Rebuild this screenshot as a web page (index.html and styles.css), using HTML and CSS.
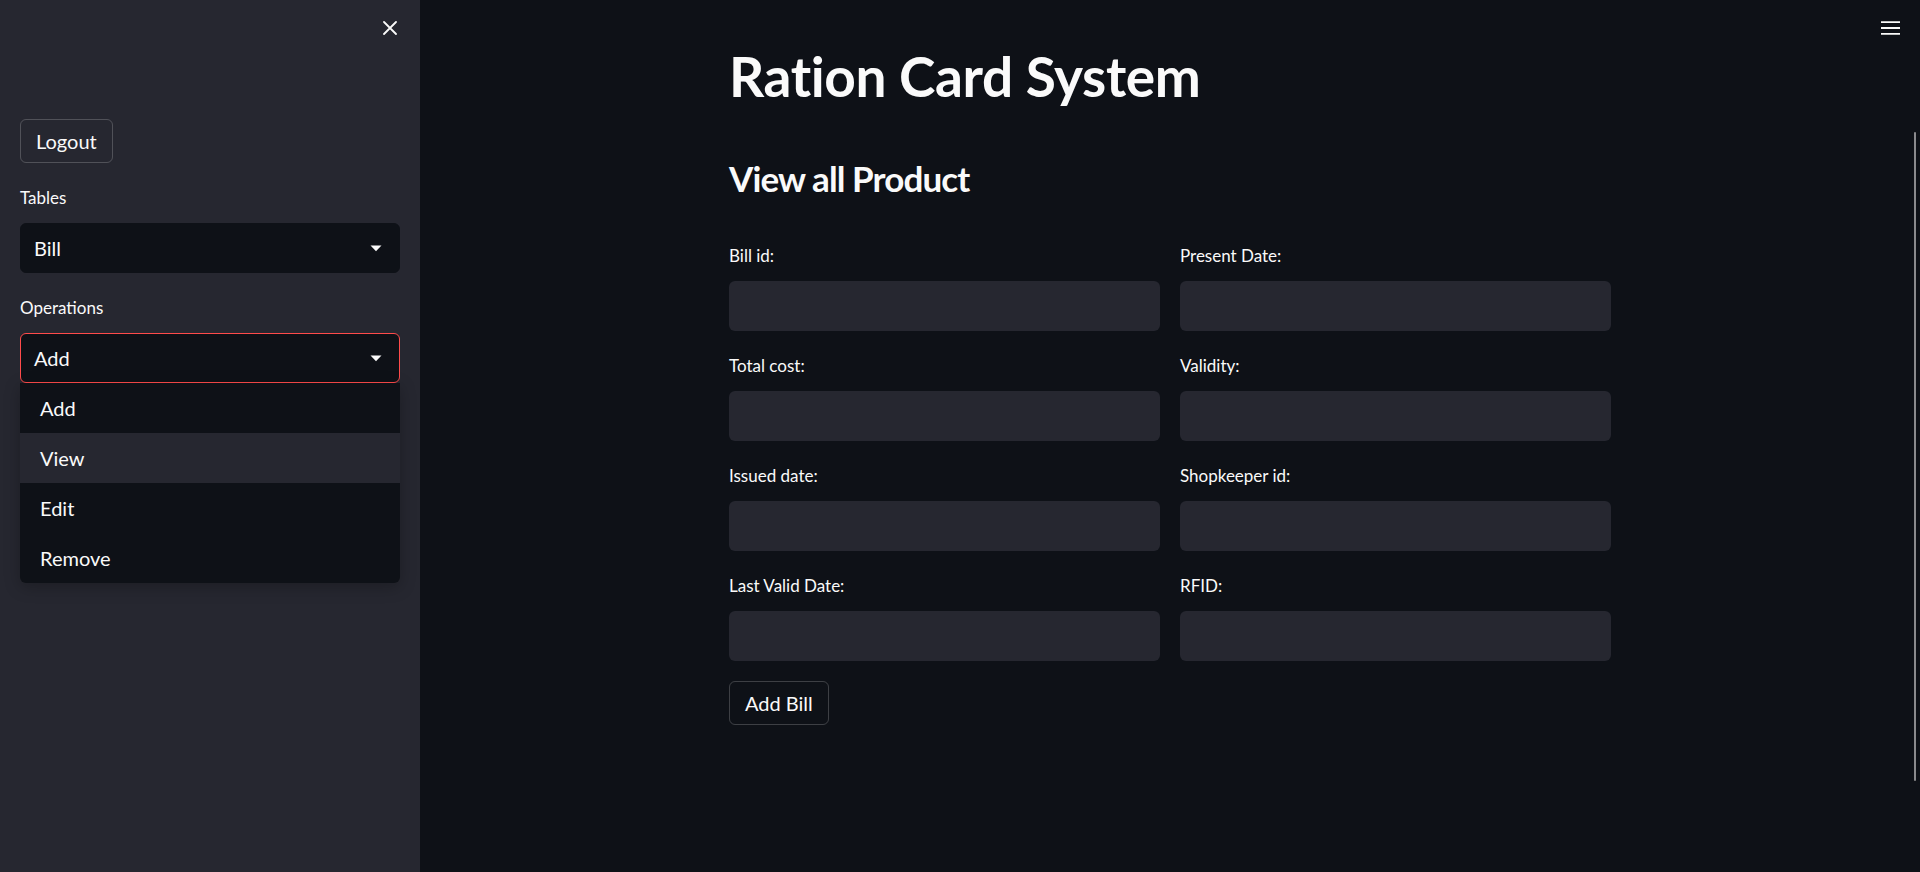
FILE: index.html
```html
<!DOCTYPE html>
<html lang="en">
<head>
<meta charset="utf-8">
<title>Ration Card System</title>
<link rel="stylesheet" href="styles.css">
</head>
<body>
<div class="app">
  <aside class="sidebar">
    <div class="sidebar-head">
      <button class="close-btn" aria-label="Close sidebar">
        <svg width="14" height="14" viewBox="0 0 14 14"><path d="M1 1 L13 13 M13 1 L1 13" stroke="#fafafa" stroke-width="1.8" stroke-linecap="round"/></svg>
      </button>
    </div>
    <div class="sidebar-body">
      <button class="btn">Logout</button>
      <div class="field">
        <label class="label">Tables</label>
        <div class="select">
          <span>Bill</span>
          <svg class="caret" width="12" height="7" viewBox="0 0 12 7"><path d="M0.5 0.5 H11.5 L6 6.3 Z" fill="#fafafa"/></svg>
        </div>
      </div>
      <div class="field">
        <label class="label">Operations</label>
        <div class="select-wrap">
          <div class="select focused">
            <span>Add</span>
            <svg class="caret" width="12" height="7" viewBox="0 0 12 7"><path d="M0.5 0.5 H11.5 L6 6.3 Z" fill="#fafafa"/></svg>
          </div>
          <ul class="menu">
            <li class="option">Add</li>
            <li class="option hover">View</li>
            <li class="option">Edit</li>
            <li class="option">Remove</li>
          </ul>
        </div>
      </div>
    </div>
  </aside>
  <main class="main">
    <div class="toolbar">
      <svg width="19" height="14" viewBox="0 0 19 14"><path d="M0 1.2 H19 M0 7 H19 M0 12.8 H19" stroke="#fafafa" stroke-width="1.8"/></svg>
    </div>
    <div class="scroll-thumb"></div>
    <div class="block">
      <h1 class="title">Ration Card System</h1>
      <h3 class="subtitle">View all Product</h3>
      <div class="form-grid">
        <div class="input-field"><label class="label">Bill id:</label><div class="input"></div></div>
        <div class="input-field"><label class="label">Present Date:</label><div class="input"></div></div>
        <div class="input-field"><label class="label">Total cost:</label><div class="input"></div></div>
        <div class="input-field"><label class="label">Validity:</label><div class="input"></div></div>
        <div class="input-field"><label class="label">Issued date:</label><div class="input"></div></div>
        <div class="input-field"><label class="label">Shopkeeper id:</label><div class="input"></div></div>
        <div class="input-field"><label class="label">Last Valid Date:</label><div class="input"></div></div>
        <div class="input-field"><label class="label">RFID:</label><div class="input"></div></div>
      </div>
      <button class="btn add-btn">Add Bill</button>
    </div>
  </main>
</div>
</body>
</html>
```
FILE: styles.css
```css
* { box-sizing: border-box; }
html, body {
  margin: 0;
  padding: 0;
  height: 872px;
  overflow: hidden;
  background: #0e1117;
  font-family: "Lato", "Noto Sans", "Liberation Sans", sans-serif;
  color: #fafafa;
}
.app {
  display: flex;
  height: 872px;
}
.sidebar {
  width: 420px;
  flex: 0 0 420px;
  background: #262730;
  display: flex;
  flex-direction: column;
}
.sidebar-head {
  display: flex;
  justify-content: flex-end;
  padding: 21px 23px 0 0;
  height: 119px;
}
.close-btn {
  width: 14px;
  height: 14px;
  padding: 0;
  border: 0;
  background: transparent;
  display: flex;
}
.sidebar-body {
  padding: 0 20px;
  display: flex;
  flex-direction: column;
  align-items: flex-start;
}
.btn {
  height: 44px;
  padding: 0 15px;
  background: transparent;
  border: 1px solid rgba(250, 250, 250, 0.2);
  border-radius: 6px;
  color: #fafafa;
  font-family: inherit;
  font-size: 20px;
  line-height: 1;
}
.field {
  width: 100%;
  margin-top: 24px;
  display: flex;
  flex-direction: column;
}
.label {
  display: block;
  font-size: 17px;
  line-height: 21px;
  height: 21px;
  color: #fafafa;
  margin-bottom: 15px;
}
.select {
  height: 50px;
  background: #0e1117;
  border: 1px solid #0e1117;
  border-radius: 6px;
  display: flex;
  align-items: center;
  justify-content: space-between;
  padding: 0 17px 0 13px;
  font-size: 20px;
}
.select.focused {
  border-color: #ff4b4b;
}
.caret { display: block; }
.select-wrap {
  position: relative;
}
.menu {
  position: absolute;
  top: 50px;
  left: 0;
  right: 0;
  margin: 0;
  padding: 0;
  list-style: none;
  background: #0e1117;
  border-radius: 0 0 6px 6px;
  box-shadow: 0 4px 16px rgba(0, 0, 0, 0.25);
  overflow: hidden;
}
.option {
  height: 50px;
  display: flex;
  align-items: center;
  padding-left: 20px;
  font-size: 20px;
}
.option.hover {
  background: #262730;
}
.main {
  flex: 1;
  position: relative;
  background: #0e1117;
}
.toolbar {
  position: absolute;
  top: 21px;
  right: 20px;
  display: flex;
}
.toolbar svg { display: block; }
.scroll-thumb {
  position: absolute;
  right: 4px;
  top: 132px;
  width: 2px;
  height: 649px;
  background: #8a8a8d;
  border-radius: 1px;
}
.block {
  width: 882px;
  margin: 0 auto;
  padding-top: 43px;
}
.title {
  margin: 0;
  font-size: 55px;
  line-height: 66px;
  font-weight: 700;
  letter-spacing: -0.4px;
}
.subtitle {
  margin: 48px 0 0;
  font-size: 35px;
  line-height: 42px;
  font-weight: 700;
  letter-spacing: -0.9px;
}
.form-grid {
  margin-top: 46px;
  display: grid;
  grid-template-columns: 1fr 1fr;
  column-gap: 20px;
  row-gap: 24px;
}
.input-field {
  display: flex;
  flex-direction: column;
}
.input {
  height: 50px;
  background: #262730;
  border-radius: 6px;
}
.add-btn {
  margin-top: 20px;
  padding: 0 15px;
}
```
